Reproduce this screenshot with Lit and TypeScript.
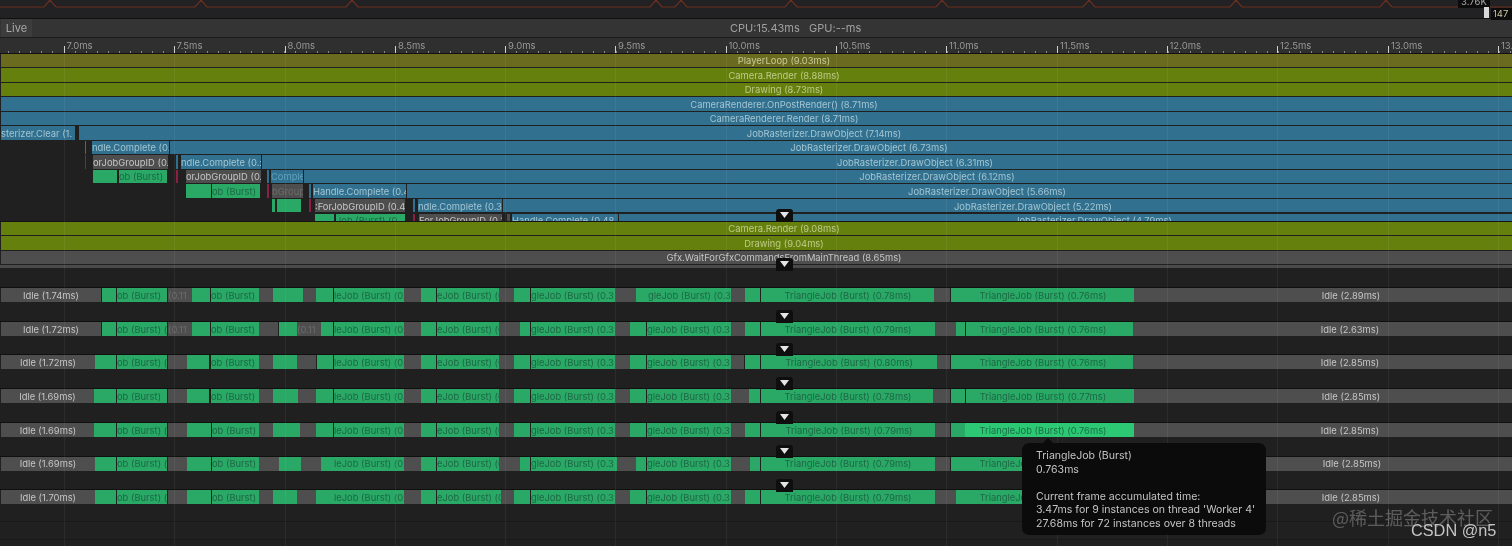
import { LitElement, html, css, svg } from "lit";
import { customElement } from "lit/decorators.js";

type Bar = [number, number, string, string?, string?];

const c = (x0: number, cx: number, cls: string, text: string): Bar => [x0, 2 * cx - x0, cls, text, "center"];

const MAJOR: [number, string][] = [
  [63.5, "7.0ms"], [173.5, "7.5ms"], [284.5, "8.0ms"], [395, "8.5ms"], [505, "9.0ms"], [615, "9.5ms"], [725.5, "10.0ms"],
  [836, "10.5ms"], [946, "11.0ms"], [1057, "11.5ms"], [1166.5, "12.0ms"], [1277, "12.5ms"], [1388, "13.0ms"], [1498, "13."],
];
const MINOR = Array.from({ length: 138 }, (_, i) => 8.3 + i * 11.04);
const PEAKS = [50, 201, 352, 656, 681, 791, 942, 1089, 1236, 1386];

const TOP: Bar[][] = [
  [c(1, 784, "olive2", "PlayerLoop (9.03ms)")],
  [c(1, 784, "olive", "Camera.Render (8.88ms)")],
  [c(1, 784, "olive", "Drawing (8.73ms)")],
  [c(1, 784, "blue", "CameraRenderer.OnPostRender() (8.71ms)")],
  [c(1, 784, "blue", "CameraRenderer.Render (8.71ms)")],
  [[1, 75, "blue", "sterizer.Clear (1."], c(79, 824, "blue", "JobRasterizer.DrawObject (7.14ms)")],
  [[84.5, 86, "blue"], [92, 169, "blue", "ndle.Complete (0."], c(170, 869, "blue", "JobRasterizer.DrawObject (6.73ms)")],
  [[84.5, 86, "red"], [93, 168, "grey", "orJobGroupID (0.:"], [176, 178, "blue"], [181, 261, "blue", "ndle.Complete (0.:"], c(262, 915, "blue", "JobRasterizer.DrawObject (6.31ms)")],
  [[93, 117, "green"], [119, 167, "green", "ob (Burst)"], [176, 178, "red"], [186, 261, "grey", "orJobGroupID (0.3"], [267, 268.5, "blue"], [271, 303, "blue dim", "Comple"], c(304, 937, "blue", "JobRasterizer.DrawObject (6.12ms)")],
  [[186, 211, "green"], [212, 260, "green", "ob (Burst)"], [267, 268.5, "red"], [272, 303, "grey dim", "bGroupl"], [309, 310.5, "blue"], [313, 406, "blue", "Handle.Complete (0.42"], c(407, 987, "blue", "JobRasterizer.DrawObject (5.66ms)")],
  [[272, 275, "green"], [277, 301, "green"], [309, 310.5, "red"], [315, 405, "grey", ":ForJobGroupID (0.41"], [413, 415, "blue"], [418, 502, "blue", "ndle.Complete (0.3"], c(503, 1033, "blue", "JobRasterizer.DrawObject (5.22ms)")],
  [[315, 334, "green"], [336, 405, "green", "Job (Burst) (0."], [413, 415, "red"], [419, 502, "grey", "ForJobGroupID (0.3"], [507, 510, "grey"], [512, 618, "blue", "Handle.Complete (0.48"], c(619, 1093, "blue", "JobRasterizer.DrawObject (4.79ms)")],
];

const MID: Bar[][] = [
  [c(1, 784, "olive", "Camera.Render (9.08ms)")],
  [c(1, 784, "olive", "Drawing (9.04ms)")],
  [c(1, 784, "grey", "Gfx.WaitForGfxCommandsFromMainThread (8.65ms)")],
];

const g = (a: number, b: number, t?: string, cls = "green"): Bar => [a, b, cls, t];
const w = (a: number, b: number, t?: string): Bar => [a, b, "grey dim", t];
const tri = (a: number, b: number, ms: string, cx: number, cls = "green"): Bar => [a, b, cls, `TriangleJob (Burst) (${ms}ms)`, `c${cx}`];

const idle = (x1: number, cx: number, ms: string): Bar => [1, x1, "grey", `Idle (${ms}ms)`, `c${cx}`];
const idleEnd = (x0: number, cx: number, ms: string): Bar => [x0, 1520, "grey", `Idle (${ms}ms)`, `c${cx}`];

const WORKERS: Bar[][] = [
  [idle(101, 51, "1.74"), g(102, 116), g(117, 167, "ob (Burst)"), w(168, 192, "(0.11"), g(192, 210), g(211, 259, "ob (Burst)"), w(259, 273), g(273, 303), w(303, 316), g(316, 333), g(334, 404, "leJob (Burst) (0."), w(404, 421), g(421, 436), g(437, 499, "eJob (Burst) (0"), w(499, 514), g(514, 530), g(531, 615, "gleJob (Burst) (0.3"), w(615, 636), g(636, 648), g(648, 731, "gleJob (Burst) (0.3"), w(731, 745), g(745, 760), tri(761, 934, "0.78", 848), w(934, 950), tri(951, 1134, "0.76", 1043), idleEnd(1134, 1351, "2.89")],
  [idle(101, 51, "1.72"), g(102, 116), g(117, 167, "ob (Burst) ("), w(168, 192, "(0.11"), g(192, 210), g(211, 259, "ob (Burst)"), w(259, 278), g(279, 297), w(297, 321, "(0.11"), g(321, 333), g(334, 404, "leJob (Burst) (0."), w(404, 421), g(421, 436), g(437, 499, "eJob (Burst) (0"), w(499, 520), g(520, 530), g(531, 615, "gleJob (Burst) (0.3"), w(615, 630), g(630, 646), g(647, 731, "gleJob (Burst) (0.3"), w(731, 745), g(745, 760), tri(761, 935, "0.79", 848), w(935, 956), g(956, 965), tri(966, 1133, "0.76", 1043), idleEnd(1133, 1350, "2.63")],
  [idle(95, 48, "1.72"), g(95, 116), g(117, 167, "ob (Burst) ("), w(168, 187), g(187, 209), g(211, 259, "ob (Burst)"), w(259, 273), g(273, 297), w(297, 316), g(317, 333), g(334, 404, "leJob (Burst) (0."), w(404, 421), g(421, 436), g(437, 499, "eJob (Burst) (0"), w(499, 514), g(514, 530), g(531, 615, "gleJob (Burst) (0.3"), w(615, 630), g(630, 646), g(647, 731, "gleJob (Burst) (0.3"), w(731, 744), g(745, 760), tri(761, 937, "0.80", 849), w(937, 950), tri(951, 1133, "0.76", 1043), idleEnd(1133, 1350, "2.85")],
  [idle(94, 47.5, "1.69"), g(94, 116), g(117, 167, "ob (Burst)"), w(168, 187), g(187, 209), g(211, 259, "ob (Burst)"), w(259, 273), g(273, 298), w(298, 316), g(316, 333), g(334, 404, "leJob (Burst) (0."), w(404, 421), g(421, 436), g(437, 499, "eJob (Burst) (0"), w(499, 514), g(514, 530), g(531, 615, "gleJob (Burst) (0.3"), w(615, 630), g(630, 646), g(647, 731, "gleJob (Burst) (0.3"), w(731, 749), g(749, 760), tri(761, 933, "0.78", 848), w(933, 950), g(951, 965), tri(966, 1134, "0.77", 1043), idleEnd(1134, 1351, "2.85")],
  [idle(94, 48, "1.69"), g(94, 116), g(117, 167, "ob (Burst) ("), w(168, 187), g(187, 211), g(212, 259, "ob (Burst)"), w(259, 273), g(273, 300), w(300, 316), g(316, 333), g(334, 404, "leJob (Burst) (0."), w(404, 421), g(421, 436), g(437, 499, "eJob (Burst) (0"), w(499, 514), g(514, 530), g(531, 615, "gleJob (Burst) (0.3"), w(615, 630), g(630, 646), g(647, 731, "gleJob (Burst) (0.3"), w(731, 745), g(745, 760), tri(761, 935, "0.79", 849), w(935, 950), g(951, 965), tri(965, 1134, "0.76", 1043, "hot"), idleEnd(1134, 1350, "2.85")],
  [idle(95, 48, "1.69"), g(95, 116), g(117, 167, "ob (Burst) ("), w(168, 187), g(187, 211), g(212, 259, "ob (Burst)"), w(259, 279), g(279, 301), w(301, 321), g(321, 334), g(334, 404, "leJob (Burst) (0."), w(404, 421), g(421, 436), g(437, 499, "eJob (Burst) (0"), w(499, 520), g(520, 530), g(531, 617, "gleJob (Burst) (0.3"), w(617, 636), g(636, 646), g(647, 731, "gleJob (Burst) (0.3"), w(731, 750), g(750, 760), tri(761, 935, "0.79", 848), w(935, 950), tri(951, 1134, "0.76", 1043), idleEnd(1134, 1352, "2.85")],
  [idle(95, 48, "1.70"), g(95, 116), g(117, 167, "ob (Burst) ("), w(168, 187), g(187, 211), g(212, 259, "ob (Burst)"), w(259, 273), g(273, 297), w(297, 316), g(316, 334), g(334, 404, "leJob (Burst) (0."), w(404, 421), g(421, 436), g(437, 501, "eJob (Burst) (0"), w(501, 514), g(514, 530), g(531, 615, "gleJob (Burst) (0.3"), w(615, 630), g(630, 646), g(647, 731, "gleJob (Burst) (0.3"), w(731, 745), g(745, 760), tri(761, 935, "0.79", 848), w(935, 956), tri(956, 1134, "0.76", 1043), idleEnd(1134, 1351, "2.85")],
];

const ARROWS = [209, 258, 310, 343, 377, 411, 445, 479];

@customElement("app-root")
export class AppRoot extends LitElement {
  static styles = css`
    :host { display: block; position: relative; width: 1512px; height: 546px; overflow: hidden; background: #202020; font-family: Inter, "Noto Sans", sans-serif; font-size: 9.4px; filter: blur(0.3px); }
    .graph { display: block; height: 18px; background: #222123; border-bottom: 1px solid #101010; box-sizing: content-box; }
    .toolbar { display: flex; align-items: center; height: 18px; background: #343434; border-bottom: 1px solid #1c1c1c; }
    .live { display: flex; align-items: center; justify-content: center; width: 31px; height: 18px; margin-left: 1px; background: #3c3c3c; color: #a8a8a8; font-size: 11px; }
    .stats { margin-left: 698px; color: #a0a0a0; font-size: 11px; white-space: pre; }
    .ruler { position: relative; height: 14.5px; background: #2f2f2f; border-bottom: 1px solid #111; }
    .tick { position: absolute; bottom: 0; width: 1px; height: 2px; background: #8a8a8a; }
    .tick.major { width: 1.4px; height: 7px; background: #d0d0d0; }
    .rlabel { position: absolute; top: 1px; color: #989898; font-size: 9.5px; line-height: 13px; }
    .stack { display: flex; flex-direction: column; gap: 1.05px; overflow: hidden; }
    .top { height: 167px; border-bottom: 1px solid #151515; }
    .mid { height: 46px; }
    .track { position: relative; flex: none; height: 13.5px; }
    .thin { flex: none; height: 13.5px; background: #4a4a4a; }
    .workers { display: flex; flex-direction: column; gap: 18.72px; padding-top: 19.5px; }
    .wtrack { position: relative; height: 15px; border-top: 1px solid #101010; box-sizing: border-box; }
    .rules { display: flex; flex-direction: column; gap: 17px; margin-top: 17px; }
    .rules i { display: block; height: 1px; background: #191919; }
    .bar { position: absolute; top: 0; bottom: 0; display: flex; align-items: center; overflow: hidden; white-space: nowrap; line-height: 1; }
    .bar span { flex: none; padding-top: 1px; }
    .center { justify-content: center; }
    .blue { background: #31718f; color: #a3c5d3; }
    .olive { background: #66800e; color: #bfca88; }
    .olive2 { background: #6b6b20; color: #cbca9a; }
    .green { background: #2aa866; color: #1c6844; }
    .hot { background: #2cc873; color: #1a6e46; }
    .grey { background: #4e4e4e; color: #c6c6c6; }
    .red { background: #8e1f44; }
    .dim { color: #6c6c6c; }
    .blue.dim { color: #62a0bd; }
    .vline { position: absolute; top: 54px; bottom: 0; width: 1px; background: rgba(255,255,255,0.055); pointer-events: none; }
    .arrow { position: absolute; left: 776px; width: 17px; height: 11px; padding-top: 2px; background: #0e0e0e; border-radius: 3px 3px 0 0; display: flex; justify-content: center; }
    .arrow svg { width: 9px; height: 6px; display: block; margin-top: 1px; }
    .tag { position: absolute; background: #0c0c0c; color: #aaa; font-size: 9.5px; line-height: 1; }
    .handle { position: absolute; left: 1484px; top: 7px; width: 5px; height: 11px; background: #d8d8d8; }
    .tip { position: absolute; left: 1022px; top: 443px; width: 244px; height: 92px; box-sizing: border-box; padding: 6px 14px; background: #0b0b0b; border-radius: 7px; color: #c4c4c4; font-size: 10.55px; line-height: 13.55px; white-space: nowrap; }
    .tip p { margin: 0; }
    .tip .gap { height: 13.55px; }
    .caret { position: absolute; left: 1042px; top: 438px; width: 0; height: 0; border: 6px solid transparent; border-top: 0; border-bottom-color: #0b0b0b; }
    .wm1 { position: absolute; left: 1332px; top: 506px; color: rgba(255,255,255,0.27); font-size: 18px; line-height: 22px; white-space: nowrap; font-family: "Noto Sans CJK SC", "Noto Sans", sans-serif; }
    .wm2 { position: absolute; left: 1411px; top: 521px; color: #c4c4c4; font-size: 16.3px; line-height: 18px; white-space: nowrap; font-family: "Liberation Sans", Arial, sans-serif; }
  `;

  private bar(b: Bar) {
    const [x0, x1, cls, text, align] = b;
    const center = align === "center";
    const cx = align && align.startsWith("c") && !center ? parseFloat(align.slice(1)) : null;
    // Labels sit at the centre of the bar, or at their own centre when the data names one.
    const shift = cx !== null ? `padding-left:${Math.max(0, 2 * (cx - x0) - (x1 - x0))}px;padding-right:${Math.max(0, (x1 - x0) - 2 * (cx - x0))}px;box-sizing:border-box;` : "";
    const pos = `left:${x0}px;width:${x1 - x0}px;${shift}`;
    return html`<div class="bar ${cls} ${center || cx !== null ? "center" : ""}" style=${pos}>${text ? html`<span>${text}</span>` : ""}</div>`;
  }

  private track(bars: Bar[], cls = "track") {
    return html`<div class=${cls}>${bars.map((b) => this.bar(b))}</div>`;
  }

  render() {
    const line = PEAKS.reduce((d, p) => `${d} L${p - 6} 7 L${p} 0 L${p + 6} 7`, "M0 7") + " L1512 7";
    return html`
      <svg class="graph" width="1512" height="18" viewBox="0 0 1512 18">
        ${svg`<path d=${line} fill="none" stroke="#6a3020" stroke-width="1.2"/>`}
      </svg>
      <div class="toolbar"><div class="live">Live</div><div class="stats">CPU:15.43ms   GPU:--ms</div></div>
      <div class="ruler">
        ${MINOR.map((x) => html`<div class="tick" style="left:${x}px"></div>`)}
        ${MAJOR.map(([x, t]) => html`<div class="tick major" style="left:${x}px"></div><div class="rlabel" style="left:${x + 3}px">${t}</div>`)}
      </div>
      <div class="stack top">${TOP.map((r) => this.track(r))}</div>
      <div class="stack mid">${MID.map((r) => this.track(r))}<div class="thin"></div></div>
      <div class="workers">${WORKERS.map((r) => this.track(r, "wtrack"))}</div>
      <div class="rules"><i></i><i></i></div>

      ${MAJOR.map(([x]) => html`<div class="vline" style="left:${x}px"></div>`)}
      ${ARROWS.map((y) => html`<div class="arrow" style="top:${y}px"><svg viewBox="0 0 9 6"><path d="M0 0H9L4.5 6Z" fill="#e4e4e4"/></svg></div>`)}
      <div class="tag" style="left:1458px;top:-3px;padding:0 3px 1px">3.76K</div>
      <div class="handle"></div>
      <div class="tag" style="left:1491px;top:8px;width:21px;height:11px;padding:1px 0 0 2px;color:#c9c7a0">147</div>
      <div class="caret"></div>
      <div class="tip">
        <p>TriangleJob (Burst)</p>
        <p>0.763ms</p>
        <div class="gap"></div>
        <p>Current frame accumulated time:</p>
        <p>3.47ms for 9 instances on thread 'Worker 4'</p>
        <p>27.68ms for 72 instances over 8 threads</p>
      </div>
      <div class="wm1">@稀土掘金技术社区</div>
      <div class="wm2">CSDN @n5</div>
    `;
  }
}
